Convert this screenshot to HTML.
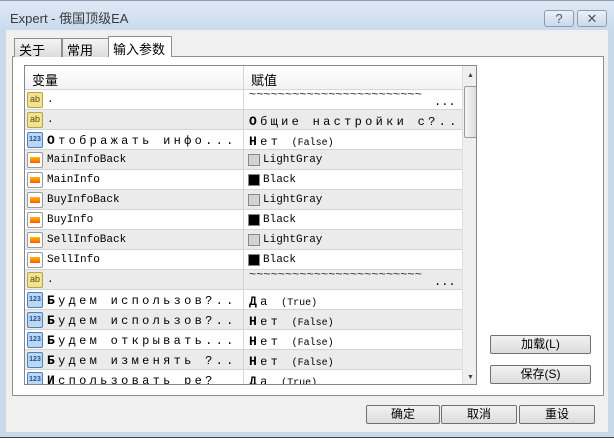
<!DOCTYPE html>
<html><head><meta charset="utf-8"><style>
*{margin:0;padding:0;box-sizing:border-box}
body{width:614px;height:443px;overflow:hidden;background:#c9d9ea;font-family:"Liberation Sans","Noto Sans CJK SC",sans-serif;position:relative}
.abs{position:absolute}
#title{left:0;top:0;width:614px;height:30px;background:linear-gradient(#dfe9f5,#c9daee);border-top:1px solid #8a9cb0}
#title span{position:absolute;left:10px;top:7px;font-size:13px;color:#3a3a3a}
.tb{top:10px;width:30px;height:17px;border:1px solid #8c9db3;border-radius:3px;background:linear-gradient(#e9f0f8,#cbd9ea);font-size:13px;text-align:center;line-height:15px;color:#555}
#client{left:6px;top:30px;width:602px;height:402px;background:#f0f0f0}
.tab{top:38px;height:19px;border:1px solid #8e8e8e;border-bottom:none;background:linear-gradient(#f4f4f4,#dcdcdc);font-size:13px;padding:1px 4px 0 4px}
#panel{left:12px;top:56px;width:592px;height:340px;border:1px solid #8e8e8e;background:#fff}
#list{left:24px;top:65px;width:453px;height:320px;border:1px solid #828790;background:#fff;overflow:hidden}
.hdr{position:absolute;top:0;height:24px;background:linear-gradient(#fff,#f3f3f3);border-bottom:1px solid #d5d5d5;font-size:13px;padding:4px 0 0 7px}
.row{position:absolute;left:0;width:437px;height:20px;border-bottom:1px solid #d4d4d4}
.row.g{background:#ebebeb}
.c1{position:absolute;left:0;width:219px;height:20px;border-right:1px solid #d4d4d4}
.c2{position:absolute;left:219px;width:218px;height:20px}
.ic{position:absolute;left:2px;top:2px;width:16px;height:16px;border-radius:2px}
.ab{background:#f3e28f;border:1px solid #b9a24c;font-size:9px;color:#5a4a10;line-height:13px;text-align:center;font-family:"Liberation Sans",sans-serif}
.n{background:#bcd7f2;border:1px solid #4c82bf;font-size:7px;color:#1d4f8f;line-height:13px;text-align:center;font-weight:bold}
.cl{background:#fff;border:1px solid #999}
.cl i{position:absolute;left:2px;top:4px;width:10px;height:6px;background:linear-gradient(#ffbb00,#ff5a00)}
.t{position:absolute;left:22px;top:4px;font-family:"Liberation Mono",monospace;font-size:11px;white-space:nowrap}
.ru{font-size:12px;letter-spacing:3.3px;top:3px}
.ru b{font-size:13px}
.v{position:absolute;left:5px;top:4px;font-family:"Liberation Mono",monospace;font-size:12px;white-space:nowrap}
.sw{position:absolute;left:4px;top:4px;width:12px;height:12px;border:1px solid #888}
.btn{height:19px;border:1px solid #707070;border-radius:2px;background:linear-gradient(#f2f2f2,#dcdcdc);font-size:12px;text-align:center;line-height:17px}
</style></head><body>
<div id="title" class="abs"><span>Expert - 俄国顶级EA</span></div>
<div class="abs tb" style="left:544px">?</div>
<div class="abs tb" style="left:577px">✕</div>
<div id="client" class="abs"></div>
<div id="panel" class="abs"></div>
<div class="abs tab" style="left:14px;width:48px">关于</div>
<div class="abs tab" style="left:62px;width:47px">常用</div>
<div class="abs tab" style="left:108px;top:36px;height:21px;width:64px;background:#fff;padding-top:2px">输入参数</div>
<div id="list" class="abs">
<div class="hdr" style="left:0;width:219px;border-right:1px solid #d5d5d5">变量</div>
<div class="hdr" style="left:219px;width:218px">赋值</div>
<div style="position:absolute;left:437px;top:0;width:15px;height:320px;background:#efefef;border-left:1px solid #e0e0e0">
<div style="position:absolute;left:4px;top:6px;font-size:7px;color:#444">▲</div>
<div style="position:absolute;left:1px;top:20px;width:13px;height:52px;border:1px solid #999;border-radius:2px;background:linear-gradient(90deg,#f4f4f4,#dedede)"></div>
<div style="position:absolute;left:4px;top:308px;font-size:7px;color:#444">▼</div>
</div>
<div class="row" style="top:24px"><div class="c1"><div class="ic ab">ab</div><div class="t">.</div></div><div class="c2"><div class="v" style="top:-2px;color:#333">~~~~~~~~~~~~~~~~~~~~~~~~</div><div class="v" style="left:190px;top:5px">...</div></div></div>
<div class="row g" style="top:44px"><div class="c1"><div class="ic ab">ab</div><div class="t">.</div></div><div class="c2"><div class="v ru" style="left:5px"><b>О</b>бщие настройки с?..</div></div></div>
<div class="row" style="top:64px"><div class="c1"><div class="ic n">123</div><div class="t ru"><b>О</b>тображать инфо...</div></div><div class="c2"><div class="v ru"><b>Н</b>ет <span style="font-size:10px;letter-spacing:0">(False)</span></div></div></div>
<div class="row g" style="top:84px"><div class="c1"><div class="ic cl"><i></i></div><div class="t">MainInfoBack</div></div><div class="c2"><div class="sw" style="background:#d3d3d3"></div><div class="v" style="left:19px;font-size:11px">LightGray</div></div></div>
<div class="row" style="top:104px"><div class="c1"><div class="ic cl"><i></i></div><div class="t">MainInfo</div></div><div class="c2"><div class="sw" style="background:#000"></div><div class="v" style="left:19px;font-size:11px">Black</div></div></div>
<div class="row g" style="top:124px"><div class="c1"><div class="ic cl"><i></i></div><div class="t">BuyInfoBack</div></div><div class="c2"><div class="sw" style="background:#d3d3d3"></div><div class="v" style="left:19px;font-size:11px">LightGray</div></div></div>
<div class="row" style="top:144px"><div class="c1"><div class="ic cl"><i></i></div><div class="t">BuyInfo</div></div><div class="c2"><div class="sw" style="background:#000"></div><div class="v" style="left:19px;font-size:11px">Black</div></div></div>
<div class="row g" style="top:164px"><div class="c1"><div class="ic cl"><i></i></div><div class="t">SellInfoBack</div></div><div class="c2"><div class="sw" style="background:#d3d3d3"></div><div class="v" style="left:19px;font-size:11px">LightGray</div></div></div>
<div class="row" style="top:184px"><div class="c1"><div class="ic cl"><i></i></div><div class="t">SellInfo</div></div><div class="c2"><div class="sw" style="background:#000"></div><div class="v" style="left:19px;font-size:11px">Black</div></div></div>
<div class="row g" style="top:204px"><div class="c1"><div class="ic ab">ab</div><div class="t">.</div></div><div class="c2"><div class="v" style="top:-2px;color:#333">~~~~~~~~~~~~~~~~~~~~~~~~</div><div class="v" style="left:190px;top:5px">...</div></div></div>
<div class="row" style="top:224px"><div class="c1"><div class="ic n">123</div><div class="t ru"><b>Б</b>удем использов?..</div></div><div class="c2"><div class="v ru"><b>Д</b>а  <span style="font-size:10px;letter-spacing:0">(True)</span></div></div></div>
<div class="row g" style="top:244px"><div class="c1"><div class="ic n">123</div><div class="t ru"><b>Б</b>удем использов?..</div></div><div class="c2"><div class="v ru"><b>Н</b>ет <span style="font-size:10px;letter-spacing:0">(False)</span></div></div></div>
<div class="row" style="top:264px"><div class="c1"><div class="ic n">123</div><div class="t ru"><b>Б</b>удем открывать...</div></div><div class="c2"><div class="v ru"><b>Н</b>ет <span style="font-size:10px;letter-spacing:0">(False)</span></div></div></div>
<div class="row g" style="top:284px"><div class="c1"><div class="ic n">123</div><div class="t ru"><b>Б</b>удем изменять ?..</div></div><div class="c2"><div class="v ru"><b>Н</b>ет <span style="font-size:10px;letter-spacing:0">(False)</span></div></div></div>
<div class="row" style="top:304px"><div class="c1"><div class="ic n">123</div><div class="t ru"><b>И</b>спользовать ре?</div></div><div class="c2"><div class="v ru"><b>Д</b>а  <span style="font-size:10px;letter-spacing:0">(True)</span></div></div></div>
</div>
<div class="abs btn" style="left:490px;top:335px;width:101px">加载(L)</div>
<div class="abs btn" style="left:490px;top:365px;width:101px">保存(S)</div>
<div class="abs btn" style="left:366px;top:405px;width:74px">确定</div>
<div class="abs btn" style="left:441px;top:405px;width:76px">取消</div>
<div class="abs btn" style="left:519px;top:405px;width:76px">重设</div>
<div class="abs" style="left:0;top:437px;width:614px;height:6px;background:#fff;border-top:1px solid #444"></div>
</body></html>
